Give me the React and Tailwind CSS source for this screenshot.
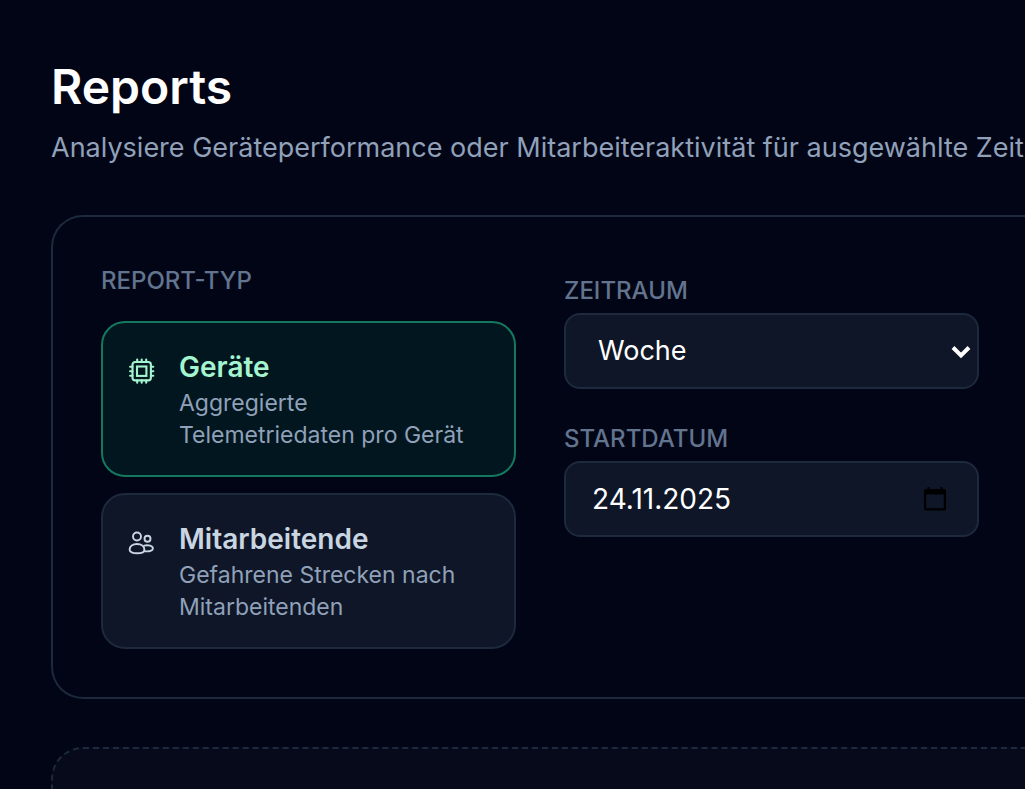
import React, { useState } from 'react';

const reportTypes = [
  {
    id: 'devices',
    title: 'Geräte',
    text: 'Aggregierte Telemetriedaten pro Gerät',
    Icon: ChipIcon,
  },
  {
    id: 'staff',
    title: 'Mitarbeitende',
    text: 'Gefahrene Strecken nach Mitarbeitenden',
    Icon: UsersIcon,
  },
];

function ChipIcon({ className }) {
  return (
    <svg viewBox="0 0 28 28" fill="none" stroke="currentColor" strokeWidth="2.1" className={className} aria-hidden="true">
      <rect x="5.5" y="5" width="18.4" height="18.4" rx="2.6" />
      <rect x="10" y="9.5" width="9.4" height="9.4" />
      <path d="M10.2 2.6V5M14.7 2.6V5M19.2 2.6V5M10.2 23.4v2.4M14.7 23.4v2.4M19.2 23.4v2.4M3.1 9.700h2.4M3.1 14.200h2.4M3.1 18.700h2.4M23.9 9.700h2.4M23.9 14.200h2.4M23.9 18.700h2.4" strokeLinecap="round" />
    </svg>
  );
}

function UsersIcon({ className }) {
  return (
    <svg viewBox="0 0 28 28" fill="none" stroke="currentColor" strokeWidth="1.9" strokeLinecap="round" strokeLinejoin="round" className={className} aria-hidden="true">
      <circle cx="10" cy="7.5" r="4" />
      <circle cx="20.5" cy="9.7" r="3" />
      <path d="M2.6 20.7c0-3.7 3.2-5.7 7.4-5.7s7.4 2 7.4 5.7c0 2.2-3.2 3.6-7.4 3.6s-7.4-1.4-7.4-3.6Z" />
      <path d="M17.2 16.7c4.2-1.2 8.7.2 8.7 2.9 0 2.2-3.2 3.1-8.2 2.7" />
    </svg>
  );
}

// Selectable tile for the report type
function TypeOption({ type, active, onSelect }) {
  const { title, text, Icon } = type;

  return (
    <button
      type="button"
      aria-pressed={active}
      onClick={onSelect}
      className={`flex items-start gap-6 rounded-3xl border-2 py-6 pr-10 pl-6 text-left ${
        active
          ? 'border-[#14785f] bg-[#02161f] text-[#a4f4cf]'
          : 'border-slate-800 bg-[#0e1627] text-slate-300'
      }`}
    >
      <Icon className="mt-2.5 size-7 shrink-0" />
      <span>
        <span className="block text-[28px] leading-10 font-semibold">{title}</span>
        <span className="block text-[23px] leading-8 text-slate-400">{text}</span>
      </span>
    </button>
  );
}

function App() {
  const [reportType, setReportType] = useState('devices');
  const [period, setPeriod] = useState('week');
  const [startDate, setStartDate] = useState('24.11.2025');

  return (
    <main className="min-h-screen overflow-hidden bg-[#020516] pt-[63px] pl-[51px] font-[Inter,sans-serif] text-white">
      <header className="mb-[47px]">
        <h1 className="text-5xl leading-12 font-semibold">Reports</h1>
        <p className="mt-[17px] text-[27px] leading-10 whitespace-nowrap text-slate-400">
          Analysiere Geräteperformance oder Mitarbeiteraktivität für ausgewählte Zeiträume.
        </p>
      </header>

      <section className="grid grid-cols-2 gap-12 rounded-l-[32px] border-2 border-r-0 border-slate-800 py-12 pr-[46px] pl-12">
        <div className="flex flex-col gap-4">
          <h2 className="mb-2 text-2xl leading-8 font-medium text-slate-500 uppercase">Report-Typ</h2>
          {reportTypes.map((type) => (
            <TypeOption
              key={type.id}
              type={type}
              active={reportType === type.id}
              onSelect={() => setReportType(type.id)}
            />
          ))}
        </div>

        <div className="flex flex-col gap-[34px] pt-[10px]">
          <div>
            <label htmlFor="period" className="mb-[6px] block text-2xl leading-8 font-medium text-slate-500 uppercase">
              Zeitraum
            </label>
            <div className="relative">
              <select
                id="period"
                value={period}
                onChange={(e) => setPeriod(e.target.value)}
                className="h-19 w-full appearance-none rounded-2xl border-2 border-slate-800 bg-[#0e1627] px-8 text-[27px] text-white"
              >
                <option value="week">Woche</option>
                <option value="month">Monat</option>
                <option value="year">Jahr</option>
              </select>
              <svg viewBox="0 0 20 14" fill="none" stroke="currentColor" strokeWidth="4" className="pointer-events-none absolute top-8 right-2 h-3.5 w-5" aria-hidden="true">
                <path d="M2 2.5l8 8 8-8" />
              </svg>
            </div>
          </div>

          <div>
            <label htmlFor="start" className="mb-[6px] block text-2xl leading-8 font-medium text-slate-500 uppercase">
              Startdatum
            </label>
            <div className="flex h-19 items-center rounded-2xl border-2 border-slate-800 bg-[#0e1627] pr-[30px] pl-[26px]">
              <input
                id="start"
                type="text"
                value={startDate}
                onChange={(e) => setStartDate(e.target.value)}
                className="min-w-0 flex-1 bg-transparent text-[28px] text-white outline-none"
              />
              <button type="button" aria-label="Kalender öffnen" className="text-black">
                <svg viewBox="0 0 24 24" className="size-6" aria-hidden="true">
                  <path fill="currentColor" fillRule="evenodd" d="M4.5 0h2v2h11V0h2v2H21a2 2 0 0 1 2 2v17.500a2 2 0 0 1-2 2H3a2 2 0 0 1-2-2V4a2 2 0 0 1 2-2h1.500ZM3.2 7.500v13.800h17.600V7.500Z" />
                </svg>
              </button>
            </div>
          </div>
        </div>
      </section>

      <section className="mt-12 h-40 rounded-l-[32px] border-2 border-r-0 border-dashed border-slate-800 bg-[#060a1b]" />
    </main>
  );
}

export default App;
